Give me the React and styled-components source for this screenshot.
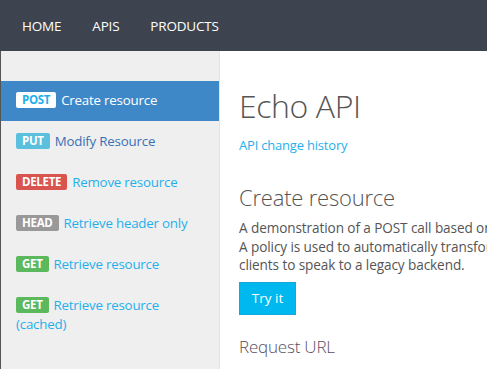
import React from 'react';
import styled, { createGlobalStyle } from 'styled-components';

const GlobalStyle = createGlobalStyle`
  html, body {
    margin: 0;
    padding: 0;
    background: #fff;
    font-family: 'Open Sans', 'Noto Sans', sans-serif;
    overflow: hidden;
  }
`;

const Page = styled.div`
  width: 487px;
  height: 369px;
  display: flex;
  flex-direction: column;
  overflow: hidden;
`;

const TopBar = styled.nav`
  height: 51px;
  flex-shrink: 0;
  background: #3d444f;
  display: flex;
  align-items: center;
  padding-left: 22px;
  gap: 31px;
`;

const NavLink = styled.a`
  color: #fff;
  font-size: 13.5px;
  letter-spacing: -0.2px;
`;

const Body = styled.div`
  flex: 1;
  display: flex;
  border-left: 1px solid #555;
`;

const Sidebar = styled.aside`
  width: 218px;
  flex-shrink: 0;
  background: #efefef;
  border-right: 1px solid #e4e4e4;
  padding-top: 30px;
  display: flex;
  flex-direction: column;
`;

const Item = styled.div`
  padding: ${(p) => (p.active ? '10px 15px 11px' : '11px 15px')};
  font-size: 13.3px;
  line-height: 19px;
  letter-spacing: -0.2px;
  color: ${(p) => (p.active ? '#fff' : p.color || '#1fb0ec')};
  background: ${(p) => (p.active ? '#3f88c8' : 'transparent')};
`;

const Badge = styled.span`
  display: inline-block;
  font-size: 11.5px;
  font-weight: 700;
  line-height: 16px;
  padding: 0 6px;
  margin-right: 5px;
  border-radius: 2px;
  letter-spacing: -0.3px;
  color: ${(p) => p.fg || '#fff'};
  background: ${(p) => p.bg};
  vertical-align: 1px;
`;

const Main = styled.main`
  flex: 1;
  padding: 35px 0 0 19px;
  color: #555;
  white-space: nowrap;
  overflow: hidden;
`;

const Title = styled.h1`
  margin: 0;
  font-size: 32px;
  font-weight: 300;
  line-height: 40px;
  color: #555;
  letter-spacing: -0.4px;
`;

const HistoryLink = styled.a`
  display: block;
  margin-top: 10px;
  font-size: 13px;
  color: #1fb0ec;
  letter-spacing: -0.2px;
`;

const Section = styled.h2`
  margin: 29px 0 0;
  font-size: 22px;
  font-weight: 300;
  line-height: 28px;
  color: #555;
  letter-spacing: -0.2px;
`;

const Para = styled.p`
  margin: 8px 0 0;
  font-size: 13.6px;
  line-height: 18.5px;
  color: #555;
  letter-spacing: -0.1px;
`;

const TryButton = styled.button`
  margin-top: 7px;
  width: 57px;
  height: 33px;
  background: #00b8f0;
  border: 1px solid #16a6dc;
  color: #fff;
  font-family: inherit;
  font-size: 13.5px;
  padding: 0;
`;

const SubHead = styled.h3`
  margin: 20px 0 0;
  font-size: 17px;
  font-weight: 300;
  color: #5a5060;
  letter-spacing: -0.2px;
`;

const ops = [
  { method: 'POST', label: 'Create resource', active: true, bg: '#fff', fg: '#1fb0ec' },
  { method: 'PUT', label: 'Modify Resource', bg: '#5bc0de', color: '#3a6fb5' },
  { method: 'DELETE', label: 'Remove resource', bg: '#d9534f' },
  { method: 'HEAD', label: 'Retrieve header only', bg: '#999' },
  { method: 'GET', label: 'Retrieve resource', bg: '#5cb85c' },
  { method: 'GET', label: 'Retrieve resource (cached)', bg: '#5cb85c' },
];

export default function App() {
  return (
    <Page>
      <GlobalStyle />
      <TopBar>
        <NavLink>HOME</NavLink>
        <NavLink>APIS</NavLink>
        <NavLink>PRODUCTS</NavLink>
      </TopBar>
      <Body>
        <Sidebar>
          {ops.map((op, i) => (
            <Item key={i} active={op.active} color={op.color}>
              <Badge bg={op.bg} fg={op.fg}>{op.method}</Badge>
              {op.label}
            </Item>
          ))}
        </Sidebar>
        <Main>
          <Title>Echo API</Title>
          <HistoryLink>API change history</HistoryLink>
          <Section>Create resource</Section>
          <Para>
            A demonstration of a POST call based on the echo backend above.
            <br />
            A policy is used to automatically transform any request sent in JSON
            <br />
            clients to speak to a legacy backend.
          </Para>
          <TryButton>Try it</TryButton>
          <SubHead>Request URL</SubHead>
        </Main>
      </Body>
    </Page>
  );
}
